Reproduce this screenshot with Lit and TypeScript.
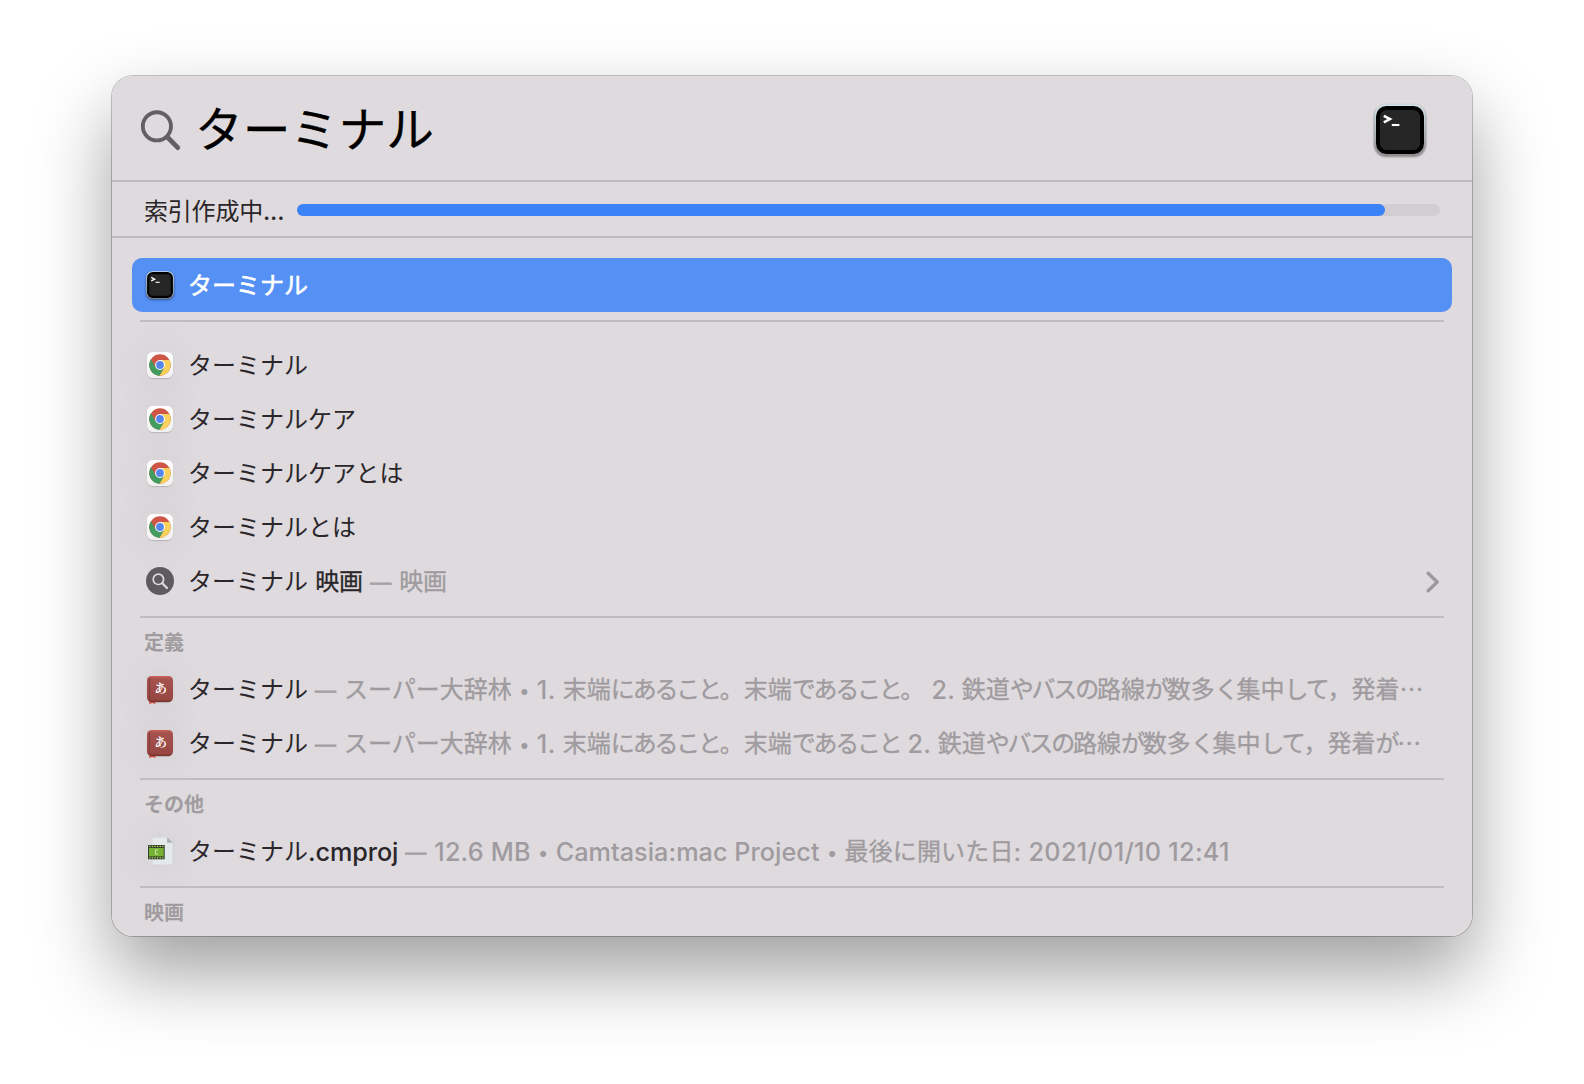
import { LitElement, html, svg, css, nothing } from "lit";
import { customElement, property } from "lit/decorators.js";

type Run = { text: string; ls?: number; kind?: "latin" | "bullet" | "medium" };
type Item = { icon: string; title: Run[]; detail?: Run[]; chevron?: boolean; selected?: boolean };
type Section = { label?: string; items: Item[] };

const T: Run = { text: "ターミナル" };
const dot: Run = { text: "•", kind: "bullet" };
const latin = (text: string, ls = 0): Run => ({ text, ls, kind: "latin" });
const kana = (text: string): Run => ({ text, ls: -2.2 });
const kanji = (text: string): Run => ({ text });

const definition = (first: Run[], last: Run[]): Run[] => [
  { text: "スーパー大辞林" },
  dot,
  latin("1. ", 0.5),
  kanji("末端"), kana("にあること"), kanji("。末端"), kana("であること"),
  ...first,
  latin(" 2. ", 0.2),
  kanji("鉄道"), kana("やバスの"), kanji("路線"), kana("が"), kanji("数多"), kana("く"),
  kanji("集中"), kana("して"), kanji("，発着"),
  ...last,
  kanji("⋯"),
];

const sections: Section[] = [
  {
    items: [
      { icon: "chrome", title: [T] },
      { icon: "chrome", title: [{ text: "ターミナルケア" }] },
      { icon: "chrome", title: [{ text: "ターミナルケアとは" }] },
      { icon: "chrome", title: [{ text: "ターミナルとは" }] },
      {
        icon: "search",
        title: [T, latin(" ", 0.4), { text: "映画", kind: "medium" }],
        detail: [{ text: "映画", ls: -0.2, kind: "medium" }],
        chevron: true,
      },
    ],
  },
  {
    label: "定義",
    items: [
      { icon: "dict", title: [T], detail: definition([kanji("。")], []) },
      { icon: "dict", title: [T], detail: definition([], [kana("が")]) },
    ],
  },
  {
    label: "その他",
    items: [
      {
        icon: "doc",
        title: [T, latin(".cmproj", -0.1)],
        detail: [
          latin("12.6 MB", 0.2), dot, latin("Camtasia:mac Project", 0.05), dot,
          { text: "最後に開いた日", ls: 0.15 },
          latin(": 2021/01/10 12:41", 0.3),
        ],
      },
    ],
  },
  { label: "映画", items: [] },
];

const icons: Record<string, unknown> = {
  terminal: svg`
    <defs><linearGradient id="rim" x1="0" y1="0" x2="0" y2="1"><stop offset="0" stop-color="#d3e6ee"/><stop offset="1" stop-color="#8f8d90"/></linearGradient></defs>
    <rect x=".4" y=".4" width="51.200" height="51.200" rx="11.800" fill="url(#rim)"/>
    <rect x="2" y="2" width="48" height="48" rx="10.500" fill="#000"/>
    <rect x="6" y="6" width="40" height="40" rx="6.500" fill="#262626"/>
    <path d="M9.800 11.800 16 15.100 9.800 18.400" fill="none" stroke="#fff" stroke-width="2.500"/>
    <path d="M17.800 21h7.600" stroke="#fff" stroke-width="2.100"/>`,
  chrome: svg`
    <defs><linearGradient id="tile" x1="0" y1="0" x2="0" y2="1"><stop offset="0" stop-color="#fff"/><stop offset="1" stop-color="#f0f0f0"/></linearGradient></defs>
    <rect width="26" height="26" rx="5.800" fill="url(#tile)"/>
    <g transform="translate(13 13)">
      <circle r="10.700" fill="#cf5547"/>
      <path d="M0 -4.900H9.510A10.700 10.700 0 0 1 -.5 10.690L4.240 2.450Z" fill="#f8d15c"/>
      <path d="M-9 -5.790A10.700 10.700 0 0 0 -.5 10.690L4.240 2.450-4.240 2.450Z" fill="#429c60"/>
      <circle r="4.900" fill="#fff"/><circle r="3.900" fill="#5686ec"/>
    </g>`,
  search: svg`
    <circle cx="13" cy="13" r="14" fill="#5f5a5e"/>
    <circle cx="11.400" cy="11.300" r="5.200" fill="none" stroke="#dedadd" stroke-width="1.700"/>
    <path d="M15.300 15.300 20 20" stroke="#dedadd" stroke-width="2.200" stroke-linecap="round"/>`,
  dict: svg`
    <defs><linearGradient id="book" x1="0" y1="0" x2="0" y2="1"><stop offset="0" stop-color="#c9605a"/><stop offset=".12" stop-color="#a5524e"/><stop offset=".9" stop-color="#984743"/><stop offset="1" stop-color="#74302d"/></linearGradient></defs>
    <path d="M2.300 24h6v4l-3-1-3 1Z" fill="#d04a3c"/>
    <rect width="26" height="26" rx="4.500" fill="url(#book)"/>
    <path d="M2.600 2V24" stroke="#843a37" stroke-width="1"/>
    <text class="glyph" x="13.800" y="17.200" text-anchor="middle">あ</text>`,
  doc: svg`
    <path d="M5.300 -.7H20L25.700 4.800V26.700H5.300Z" fill="#e4e9ec" stroke="#d2d8db" stroke-width=".6"/>
    <path d="M20.200 -.7 25.700 4.800H20.200Z" fill="#a9b0b4"/>
    <rect x="1" y="7" width="16.700" height="14.300" fill="#2f3d33"/>
    <rect x="2" y="9.900" width="14.700" height="8.500" fill="#78b235"/>
    <path d="M2.200 8.400H17" stroke="#c9e04a" stroke-width="1.100" stroke-dasharray="1.300 1.300"/>
    <path d="M2.200 19.900H17" stroke="#c9e04a" stroke-width="1.100" stroke-dasharray="1.300 1.300"/>
    <path d="M10.900 12.200H8.500V16.100H10.900" fill="none" stroke="#b9dd8c" stroke-width="1.200"/>`,
};

@customElement("result-icon")
class ResultIcon extends LitElement {
  @property() name = "";
  static styles = css`
    :host { display: block; width: 26px; height: 26px; border-radius: 6px; }
    :host([name="terminal"]) { width: 28px; height: 28px; margin: 0 -1px; filter: drop-shadow(0 1px 1px rgba(0, 0, 0, 0.5)); }
    :host([name="chrome"]), :host([name="dict"]) { box-shadow: 0 1px 1px rgba(0, 0, 0, 0.16), 0 2px 36px 8px rgba(90, 110, 105, 0.055); }
    :host([name="doc"]) { box-shadow: 0 2px 36px 8px rgba(90, 110, 105, 0.06); }
    svg { display: block; width: 100%; height: 100%; overflow: visible; }
    .glyph { font: 700 12.500px "Noto Serif CJK JP", "Noto Sans CJK JP", serif; fill: #fff; }
  `;
  render() {
    return html`<svg viewBox=${this.name === "terminal" ? "0 0 52 52" : "0 0 26 26"}>${icons[this.name]}</svg>`;
  }
}

@customElement("app-root")
class AppRoot extends LitElement {
  static styles = css`
    :host { display: block; width: 1584px; height: 1084px; box-sizing: border-box; padding: 76px 112px 0; background: #fff; overflow: hidden;
      font-family: "Noto Sans CJK JP", sans-serif; color: #2a262a; }
    .panel { width: 1360px; height: 860px; border-radius: 21px; background: #dedadd; overflow: hidden; display: flex; flex-direction: column; }
    .shadow { width: 1360px; height: 860px; border-radius: 21px; box-shadow: 0 0 0 1px rgba(0, 0, 0, 0.22), 0 36px 76px rgba(0, 0, 0, 0.38); }
    .query { flex: none; height: 104px; border-bottom: 2px solid #c0bcc0; display: flex; align-items: center; padding: 0 46px 0 28px; }
    .lens { width: 42px; height: 42px; margin: 4px 13px 0 0; }
    .term { flex: 1; font-size: 47.800px; line-height: 60px; color: #000; margin-top: -2px; -webkit-text-stroke: 0.25px #000; }
    .query .hero { width: 52px; height: 52px; border-radius: 11px; margin: 4px 0 0; }
    .indexing { flex: none; height: 54px; border-bottom: 2px solid #c0bcc0; display: flex; align-items: center; padding: 0 32px; }
    .status { width: 153px; font-size: 24px; letter-spacing: -0.2px; white-space: nowrap; }
    .dots { font-family: Inter, sans-serif; font-weight: 500; }
    .track { flex: 1; height: 12px; margin-top: 2px; border-radius: 6px; background: #d1cdd1; }
    .fill { height: 12px; border-radius: 6px; background: #3b82f7; }
    .best { padding: 20px 20px 8px; }
    .row { height: 54px; display: flex; align-items: center; padding: 0 12px 0 15px; border-radius: 10px; }
    .row.selected { background: #5590f5; color: #fff; -webkit-text-stroke: 0.6px #fff; }
    .group { padding: 0 20px 8px; }
    .rule { flex: none; height: 2px; margin: 0 28px; background: #c0bcc0; }
    .first { padding-top: 16px; }
    .label { height: 44px; display: flex; align-items: center; padding: 2px 0 0 12px; box-sizing: border-box; font-size: 20px; font-weight: 700; color: #a09ca0; }
    .text { flex: 1; margin: -3px 0 0 15px; font-size: 24px; line-height: 36px; white-space: pre; }
    .detail { color: #9f9b9f; -webkit-text-stroke: 0.3px #9f9b9f; }
    .latin { font-family: Inter, "Noto Sans CJK JP", sans-serif; font-size: 25.200px; line-height: 0; vertical-align: -1px; font-weight: 460; -webkit-text-stroke: 0; }
    .medium { -webkit-text-stroke: 0.3px currentColor; }
    .bullet { display: inline-block; width: 25px; text-align: center; font-family: Inter, sans-serif; font-size: 19px; line-height: 0; vertical-align: -0.5px; -webkit-text-stroke: 0; }
    .dash { display: inline-block; width: 21px; margin: 0 8px 0 7px; font-family: "Liberation Sans", sans-serif; font-size: 21px; line-height: 0; vertical-align: 1px; color: #a5a1a5; -webkit-text-stroke: 0.7px #a5a1a5; }
    .chevron { width: 14px; height: 24px; margin-top: 1px; }
  `;

  private run(r: Run) {
    return html`<span class=${r.kind ?? "plain"} style=${`letter-spacing:${r.ls ?? 0}px`}>${r.text}</span>`;
  }

  private row(i: Item) {
    return html`<div class="row ${i.selected ? "selected" : ""}">
      <result-icon name=${i.icon}></result-icon>
      <div class="text">${i.title.map((r) => this.run(r))}${i.detail
        ? html`<span class="dash">—</span><span class="detail">${i.detail.map((r) => this.run(r))}</span>`
        : nothing}</div>
      ${i.chevron
        ? html`<svg class="chevron" viewBox="0 0 14 24"><path d="M2.200 3.200 11.200 12 2.200 20.800" fill="none" stroke="#9c989c" stroke-width="3.300" stroke-linecap="round" stroke-linejoin="round"/></svg>`
        : nothing}
    </div>`;
  }

  render() {
    return html`<div class="shadow"><div class="panel">
      <div class="query">
        <svg class="lens" viewBox="0 0 42 42"><circle cx="16.900" cy="17.300" r="14.100" fill="none" stroke="#645f63" stroke-width="3.900"/><path d="M27.500 28.200 37.800 38.600" stroke="#645f63" stroke-width="4.800" stroke-linecap="round"/></svg>
        <div class="term">ターミナル</div>
        <result-icon class="hero" name="terminal"></result-icon>
      </div>
      <div class="indexing">
        <div class="status">索引作成中<span class="dots">...</span></div>
        <div class="track"><div class="fill" style="width:95.2%"></div></div>
      </div>
      <div class="best">${this.row({ icon: "terminal", title: [T], selected: true })}</div>
      ${sections.map((s) => html`<div class="rule"></div>
        <div class="group ${s.label ? "" : "first"}">
          ${s.label ? html`<div class="label">${s.label}</div>` : nothing}
          ${s.items.map((i) => this.row(i))}
        </div>`)}
    </div></div>`;
  }
}
